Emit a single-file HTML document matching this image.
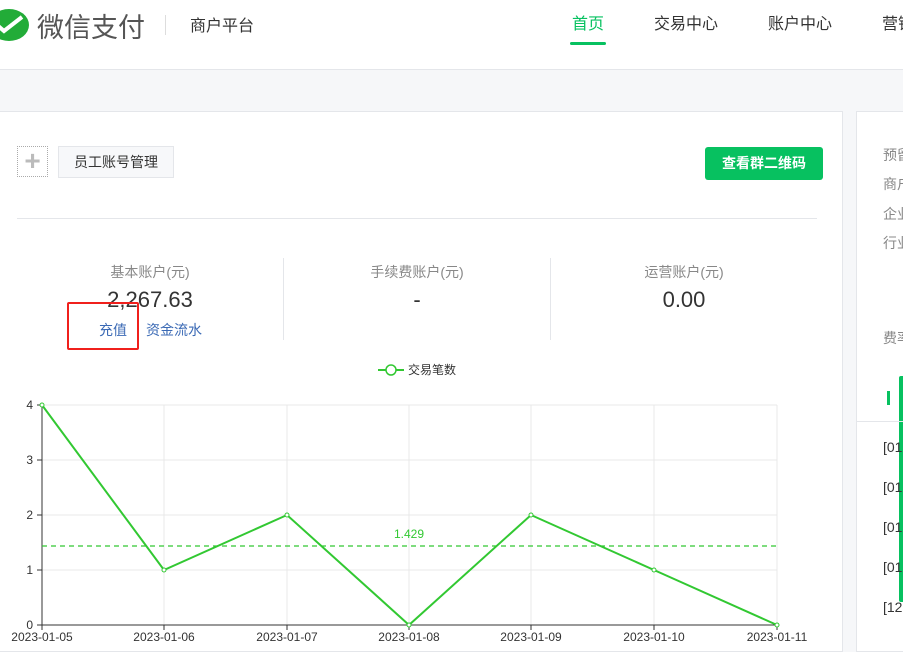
<!DOCTYPE html>
<html><head><meta charset="utf-8"><style>
*{margin:0;padding:0;box-sizing:border-box}
body{width:903px;height:652px;overflow:hidden;background:#f6f7f9;font-family:"Liberation Sans","Noto Sans CJK SC",sans-serif;position:relative}
.a{position:absolute;white-space:nowrap}
</style></head><body>
<div class="a" style="left:0;top:0;width:903px;height:70px;background:#fff;border-bottom:1px solid #e4e6ea"></div>
<svg class="a" style="left:-12px;top:8px" width="42" height="34" viewBox="0 0 42 34"><ellipse cx="21" cy="17" rx="20" ry="16" fill="#22ac38"/><path d="M9 17l7 6L34 9" stroke="#fff" stroke-width="4" fill="none"/></svg>
<div class="a" style="left:37px;top:6px;font-size:27px;color:#555">微信支付</div>
<div class="a" style="left:165px;top:15px;width:1px;height:20px;background:#ddd"></div>
<div class="a" style="left:190px;top:12px;font-size:16px;color:#333">商户平台</div>
<div class="a" style="left:572px;top:10px;font-size:16px;color:#07c160">首页</div>
<div class="a" style="left:570px;top:42px;width:36px;height:3px;background:#07c160;border-radius:2px"></div>
<div class="a" style="left:654px;top:10px;font-size:16px;color:#333">交易中心</div>
<div class="a" style="left:768px;top:10px;font-size:16px;color:#333">账户中心</div>
<div class="a" style="left:882px;top:10px;font-size:16px;color:#333">营销</div>

<div class="a" style="left:0;top:111px;width:843px;height:541px;background:#fff;border:1px solid #e4e6ea;border-left:none"></div>
<div class="a" style="left:856px;top:111px;width:47px;height:541px;background:#fff;border:1px solid #e4e6ea;border-right:none"></div>

<div class="a" style="left:17px;top:146px;width:31px;height:31px;border:1px dotted #aaa;color:#bbb;font-size:28px;line-height:28px;text-align:center;font-weight:bold">+</div>
<div class="a" style="left:58px;top:146px;width:116px;height:32px;border:1px solid #e4e6ea;background:#f7f8fa;font-size:14px;line-height:30px;text-align:center;color:#333">员工账号管理</div>
<div class="a" style="left:705px;top:147px;width:118px;height:33px;background:#07c160;border-radius:3px;color:#fff;font-size:14px;font-weight:bold;line-height:33px;text-align:center">查看群二维码</div>
<div class="a" style="left:17px;top:218px;width:800px;height:1px;background:#e4e6ea"></div>

<div class="a" style="left:50px;top:262px;width:200px;text-align:center;font-size:14px;color:#888">基本账户(元)</div>
<div class="a" style="left:50px;top:287px;width:200px;text-align:center;font-size:22px;color:#333">2,267.63</div>
<div class="a" style="left:99px;top:320px;font-size:14px;color:#3b6ab5">充值</div>
<div class="a" style="left:146px;top:320px;font-size:14px;color:#3b6ab5">资金流水</div>
<div class="a" style="left:67px;top:302px;width:72px;height:48px;border:2px solid #f0201c;border-radius:2px"></div>
<div class="a" style="left:283px;top:258px;width:1px;height:82px;background:#e4e6ea"></div>
<div class="a" style="left:550px;top:258px;width:1px;height:82px;background:#e4e6ea"></div>
<div class="a" style="left:317px;top:262px;width:200px;text-align:center;font-size:14px;color:#888">手续费账户(元)</div>
<div class="a" style="left:317px;top:287px;width:200px;text-align:center;font-size:22px;color:#333">-</div>
<div class="a" style="left:584px;top:262px;width:200px;text-align:center;font-size:14px;color:#888">运营账户(元)</div>
<div class="a" style="left:584px;top:287px;width:200px;text-align:center;font-size:22px;color:#333">0.00</div>

<svg class="a" style="left:0;top:355px" width="843" height="297" viewBox="0 355 843 297" font-family="Liberation Sans" font-size="12">
<line x1="378" y1="370" x2="404" y2="370" stroke="#32c832" stroke-width="2"/><circle cx="391" cy="370" r="5" fill="#fff" stroke="#32c832" stroke-width="1.5"/>
<text x="408" y="374" fill="#333">交易笔数</text>
<g stroke="#e8e8e8">
<line x1="42" y1="405" x2="777" y2="405"/><line x1="42" y1="460" x2="777" y2="460"/><line x1="42" y1="515" x2="777" y2="515"/><line x1="42" y1="570" x2="777" y2="570"/>
<line x1="164" y1="405" x2="164" y2="625"/><line x1="287" y1="405" x2="287" y2="625"/><line x1="409" y1="405" x2="409" y2="625"/><line x1="531" y1="405" x2="531" y2="625"/><line x1="654" y1="405" x2="654" y2="625"/><line x1="777" y1="405" x2="777" y2="625"/>
</g>
<line x1="42" y1="405" x2="42" y2="630" stroke="#333"/><line x1="37" y1="625" x2="777" y2="625" stroke="#333"/>
<g stroke="#333"><line x1="37" y1="405" x2="42" y2="405"/><line x1="37" y1="460" x2="42" y2="460"/><line x1="37" y1="515" x2="42" y2="515"/><line x1="37" y1="570" x2="42" y2="570"/>
<line x1="164" y1="625" x2="164" y2="630"/><line x1="287" y1="625" x2="287" y2="630"/><line x1="409" y1="625" x2="409" y2="630"/><line x1="531" y1="625" x2="531" y2="630"/><line x1="654" y1="625" x2="654" y2="630"/><line x1="777" y1="625" x2="777" y2="630"/></g>
<g fill="#333" text-anchor="end"><text x="33" y="409">4</text><text x="33" y="464">3</text><text x="33" y="519">2</text><text x="33" y="574">1</text><text x="33" y="629">0</text></g>
<g fill="#333" text-anchor="middle"><text x="42" y="641">2023-01-05</text><text x="164" y="641">2023-01-06</text><text x="287" y="641">2023-01-07</text><text x="409" y="641">2023-01-08</text><text x="531" y="641">2023-01-09</text><text x="654" y="641">2023-01-10</text><text x="777" y="641">2023-01-11</text></g>
<line x1="42" y1="546" x2="777" y2="546" stroke="#32c832" stroke-dasharray="5,4" stroke-width="1.2"/>
<text x="409" y="538" fill="#32c832" text-anchor="middle">1.429</text>
<polyline points="42,405 164,570 287,515 409,625 531,515 654,570 777,625" fill="none" stroke="#32c832" stroke-width="2"/>
<g fill="#fff" stroke="#32c832"><circle cx="42" cy="405" r="2"/><circle cx="164" cy="570" r="2"/><circle cx="287" cy="515" r="2"/><circle cx="409" cy="625" r="2"/><circle cx="531" cy="515" r="2"/><circle cx="654" cy="570" r="2"/><circle cx="777" cy="625" r="2"/></g>
</svg>

<div class="a" style="left:883px;top:145px;font-size:14px;color:#888">预留</div>
<div class="a" style="left:883px;top:174px;font-size:14px;color:#888">商户</div>
<div class="a" style="left:883px;top:204px;font-size:14px;color:#888">企业</div>
<div class="a" style="left:883px;top:233px;font-size:14px;color:#888">行业</div>
<div class="a" style="left:883px;top:328px;font-size:14px;color:#888">费率</div>
<div class="a" style="left:887px;top:391px;width:3px;height:14px;background:#07c160"></div>
<div class="a" style="left:899px;top:376px;width:4px;height:226px;background:#07c160;border-radius:2px 0 0 2px"></div>
<div class="a" style="left:857px;top:421px;width:46px;height:1px;background:#e4e6ea"></div>
<div class="a" style="left:883px;top:439px;font-size:14px;color:#333">[01</div>
<div class="a" style="left:883px;top:479px;font-size:14px;color:#333">[01</div>
<div class="a" style="left:883px;top:519px;font-size:14px;color:#333">[01</div>
<div class="a" style="left:883px;top:559px;font-size:14px;color:#333">[01</div>
<div class="a" style="left:883px;top:599px;font-size:14px;color:#333">[12</div>
</body></html>
